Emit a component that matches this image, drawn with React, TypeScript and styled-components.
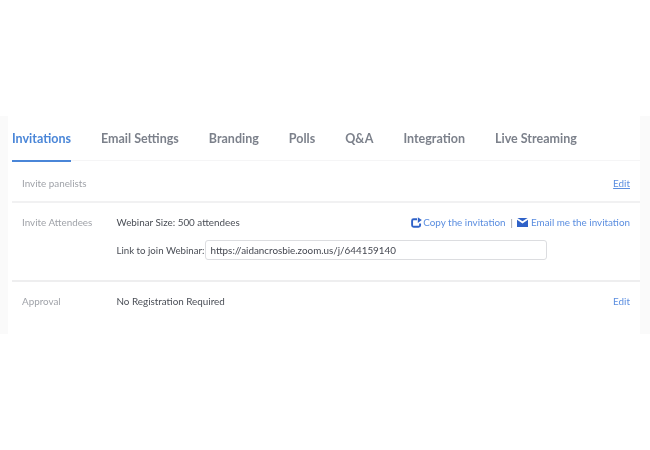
import { createGlobalStyle } from 'styled-components';
import styled from 'styled-components';

const GlobalStyle = createGlobalStyle`
  html, body {
    margin: 0;
    padding: 0;
    background: #fff;
  }
  body {
    font-family: Lato, "Liberation Sans", sans-serif;
  }
`;

const tabs = ['Invitations', 'Email Settings', 'Branding', 'Polls', 'Q&A', 'Integration', 'Live Streaming'];

function App() {
  return (
    <Page>
      <GlobalStyle />
      <Band>
        <Panel>
          <TabBar>
            {tabs.map((tab, i) => (
              <Tab key={tab} $active={i === 0}>{tab}</Tab>
            ))}
          </TabBar>
          <PanelistsRow>
            <Label>Invite panelists</Label>
            <Value />
            <EditLink $underline>Edit</EditLink>
          </PanelistsRow>
          <AttendeesRow>
            <Label>Invite Attendees</Label>
            <AttendeesBody>
              <Line>
                <Value>Webinar Size: 500 attendees</Value>
                <Actions>
                  <CopyIcon />
                  <ActionLink>Copy the invitation</ActionLink>
                  <Separator>|</Separator>
                  <MailIcon />
                  <ActionLink>Email me the invitation</ActionLink>
                </Actions>
              </Line>
              <LinkLine>
                <LinkLabel>Link to join Webinar:</LinkLabel>
                <LinkBox>https://aidancrosbie.zoom.us/j/644159140</LinkBox>
              </LinkLine>
            </AttendeesBody>
          </AttendeesRow>
          <ApprovalRow>
            <Label>Approval</Label>
            <Value>No Registration Required</Value>
            <EditLink>Edit</EditLink>
          </ApprovalRow>
        </Panel>
      </Band>
    </Page>
  );
}

export default App;

function CopyIcon() {
  return (
    <svg width="11" height="11" viewBox="0 0 11 11" fill="none" style={{ marginRight: 1 }}>
      <path d="M6 2.2H2.6C1.7 2.2 1.1 2.8 1.1 3.7v4.6c0 .9.6 1.5 1.5 1.5h5c.9 0 1.5-.6 1.5-1.5V6.6" stroke="#2f62c8" strokeWidth="1.9" />
      <path d="M6.8 .3 10.8 3.1 6.8 5.9z" fill="#2f62c8" />
    </svg>
  );
}

function MailIcon() {
  return (
    <svg width="11" height="9" viewBox="0 0 11 9" style={{ marginRight: 3, marginLeft: -1 }}>
      <path d="M.4 0h10.2L5.5 3.2z" fill="#2f62c8" />
      <path d="M0 1.8 5.5 5.6 11 1.8V9H0z" fill="#2f62c8" />
    </svg>
  );
}

const Page = styled.div`
  width: 650px;
  height: 450px;
  padding-top: 116px;
  box-sizing: border-box;
  overflow: hidden;
`;

const Band = styled.div`
  background: #fafafa;
  padding: 0 10px 0 8px;
  height: 218px;
`;

// the source is a soft, upscaled capture
const Panel = styled.div`
  background: #fff;
  height: 100%;
  padding-left: 4px;
  filter: blur(0.45px);
`;

const TabBar = styled.div`
  display: flex;
  gap: 30px;
  height: 44px;
  border-bottom: 1px solid #f5f5f6;
`;

const Tab = styled.div<{ $active: boolean }>`
  height: 44px;
  line-height: 46px;
  font-size: 12.5px;
  font-weight: 700;
  color: ${(p) => (p.$active ? '#4a86d8' : '#7c818b')};
  border-bottom: 2px solid ${(p) => (p.$active ? '#4a86d8' : 'transparent')};
`;

const Row = styled.div`
  display: flex;
  padding-right: 10px;
  font-size: 9.85px;
`;

const PanelistsRow = styled(Row)`
  align-items: center;
  height: 42px;
  box-sizing: border-box;
  padding-left: 10px;
  padding-top: 3px;
  border-bottom: 2px solid #f1f1f2;
`;

const AttendeesRow = styled(Row)`
  height: 79px;
  padding-left: 10px;
  padding-top: 12px;
  box-sizing: border-box;
  border-bottom: 2px solid #eeeeef;
`;

const ApprovalRow = styled(Row)`
  align-items: center;
  height: 38px;
  padding-left: 10px;
`;

const Label = styled.div`
  width: 94.5px;
  flex: none;
  color: #a0a3a9;
  line-height: 14px;
`;

const Value = styled.div`
  flex: 1;
  color: #4a4e56;
  line-height: 14px;
  white-space: nowrap;
`;

const LinkLabel = styled.div`
  flex: none;
  margin-right: 1px;
  color: #4a4e56;
  font-size: 9.7px;
  line-height: 14px;
  white-space: nowrap;
`;

const EditLink = styled.a<{ $underline?: boolean }>`
  color: #5b8ee0;
  text-decoration: ${(p) => (p.$underline ? 'underline' : 'none')};
`;

const AttendeesBody = styled.div`
  flex: 1;
  display: flex;
  flex-direction: column;
  gap: 11px;
`;

const Line = styled.div`
  display: flex;
  align-items: center;
`;

const LinkLine = styled(Line)``;

const Actions = styled.div`
  display: flex;
  align-items: center;
`;

const ActionLink = styled.a`
  color: #5b8ee0;
  line-height: 14px;
`;

const Separator = styled.span`
  color: #8a8d94;
  margin: 0 5px;
`;

const LinkBox = styled.div`
  width: 336px;
  height: 18px;
  line-height: 18px;
  padding-left: 4px;
  border: 1px solid #dcdde0;
  border-radius: 3px;
  color: #444750;
  font-size: 9.85px;
`;
